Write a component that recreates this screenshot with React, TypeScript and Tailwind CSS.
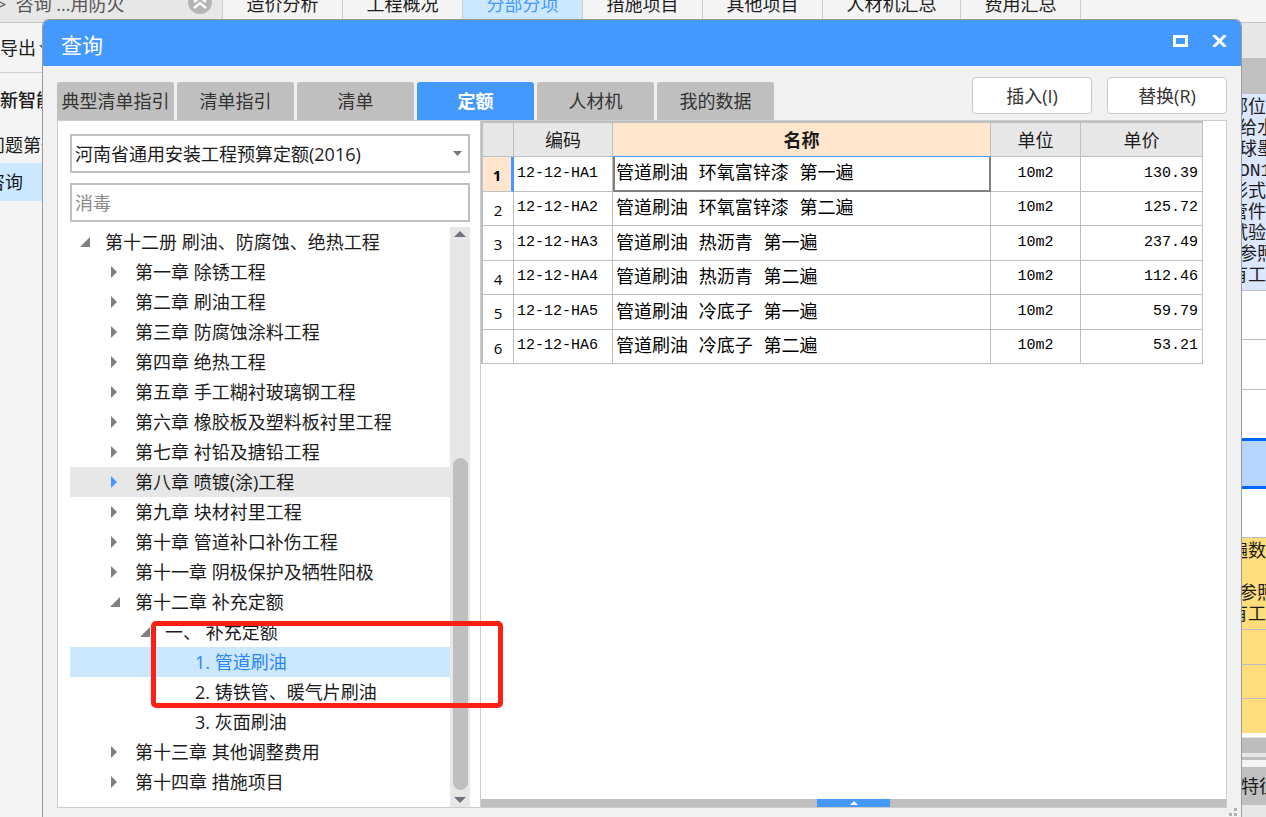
import clsx from "clsx";

const modules = [
  { name: "造价分析", width: "w-[120px]" },
  { name: "工程概况", width: "w-[120px]" },
  { name: "分部分项", width: "w-[120px]", active: true },
  { name: "措施项目", width: "w-[120px]" },
  { name: "其他项目", width: "w-[120px]" },
  { name: "人材机汇总", width: "w-[138px]" },
  { name: "费用汇总", width: "w-[120px]" },
];

const tabs = ["典型清单指引", "清单指引", "清单", "定额", "人材机", "我的数据"];

type Node = {
  text: string;
  level: number;
  open?: boolean;
  leaf?: boolean;
  hover?: boolean;
  selected?: boolean;
  marked?: boolean;
};

const nodes: Node[] = [
  { text: "第十二册 刷油、防腐蚀、绝热工程", level: 0, open: true },
  { text: "第一章 除锈工程", level: 1 },
  { text: "第二章 刷油工程", level: 1 },
  { text: "第三章 防腐蚀涂料工程", level: 1 },
  { text: "第四章 绝热工程", level: 1 },
  { text: "第五章 手工糊衬玻璃钢工程", level: 1 },
  { text: "第六章 橡胶板及塑料板衬里工程", level: 1 },
  { text: "第七章 衬铅及搪铅工程", level: 1 },
  { text: "第八章 喷镀(涂)工程", level: 1, hover: true },
  { text: "第九章 块材衬里工程", level: 1 },
  { text: "第十章 管道补口补伤工程", level: 1 },
  { text: "第十一章 阴极保护及牺牲阳极", level: 1 },
  { text: "第十二章 补充定额", level: 1, open: true },
  { text: "一、 补充定额", level: 2, open: true, marked: true },
  { text: "1. 管道刷油", level: 3, leaf: true, selected: true },
  { text: "2. 铸铁管、暖气片刷油", level: 3, leaf: true },
  { text: "3. 灰面刷油", level: 3, leaf: true },
  { text: "第十三章 其他调整费用", level: 1 },
  { text: "第十四章 措施项目", level: 1 },
];

const indent = ["pl-[10px]", "pl-[40px]", "pl-[70px]", "pl-[100px]"];

const quotas = [
  { code: "12-12-HA1", name: "管道刷油 环氧富锌漆 第一遍", unit: "10m2", price: "130.39" },
  { code: "12-12-HA2", name: "管道刷油 环氧富锌漆 第二遍", unit: "10m2", price: "125.72" },
  { code: "12-12-HA3", name: "管道刷油 热沥青 第一遍", unit: "10m2", price: "237.49" },
  { code: "12-12-HA4", name: "管道刷油 热沥青 第二遍", unit: "10m2", price: "112.46" },
  { code: "12-12-HA5", name: "管道刷油 冷底子 第一遍", unit: "10m2", price: "59.79" },
  { code: "12-12-HA6", name: "管道刷油 冷底子 第二遍", unit: "10m2", price: "53.21" },
];

// feature text of the grid behind the dialog, half of it is covered
const features = [
  { text: "部位", cut: true },
  { text: "给水" },
  { text: "球墨" },
  { text: "DN1" },
  { text: "形式", cut: true },
  { text: "管件", cut: true },
  { text: "试验", cut: true },
  { text: "参照" },
  { text: "有工", cut: true },
];

const features2 = [
  { text: "遍数", cut: true },
  { text: "" },
  { text: "参照" },
  { text: "有工", cut: true },
];

function FeatureLines({ lines }: { lines: { text: string; cut?: boolean }[] }) {
  return (
    <>
      {lines.map((line, i) => (
        <p
          key={i}
          className={clsx(
            "h-[21px] whitespace-nowrap font-['Liberation_Mono','Noto_Sans_CJK_SC',monospace] text-[18px] leading-[21px]",
            line.cut ? "-ml-[11px]" : "-ml-[2px]"
          )}
        >
          {line.text}
        </p>
      ))}
    </>
  );
}

function Background() {
  return (
    <div className="flex h-full flex-col">
      <nav className="flex h-[23px] shrink-0 items-end overflow-hidden border-b border-[#c4c4c4]">
        <div className="flex h-9 w-[223px] shrink-0 items-center justify-between border-r border-[#cccccc] bg-[#e7e7e7] pr-[10px] text-[#555555]">
          <span className="-ml-1 whitespace-nowrap">&gt;&nbsp; 咨询 ...用防火</span>
          <button aria-label="收起" className="mb-1">
            <svg width="24" height="24" viewBox="0 0 24 24" fill="none">
              <circle cx="12" cy="12" r="12" fill="#b5b5b5" />
              <path d="M6 12l6-5 6 5M6 18l6-5 6 5" stroke="#fff" strokeWidth="2.4" />
            </svg>
          </button>
        </div>
        {modules.map((m) => (
          <button
            key={m.name}
            className={clsx(
              "h-9 shrink-0 border-r border-[#cccccc]",
              m.width,
              m.active ? "bg-[#cce8ff] text-[#4499ff]" : "bg-[#f4f4f4]"
            )}
          >
            {m.name}
          </button>
        ))}
      </nav>

      <div className="flex min-h-0 flex-1 justify-between">
        <aside className="w-[43px] overflow-hidden whitespace-nowrap">
          <div className="flex h-[50px] items-center gap-[3px] border-b border-[#d0d0d0]">
            <span>导出</span>
            <svg width="9" height="5" className="shrink-0">
              <path d="M0 0h9L4.500 5z" fill="#666" />
            </svg>
          </div>
          <div className="flex h-[54px] items-center font-medium">新智能</div>
          <div className="flex h-9 items-center">
            <span className="-ml-[13px]">问题第一</span>
          </div>
          <div className="flex h-[38px] items-center bg-[#cce8ff]">
            <span className="-ml-[13px]">咨询</span>
          </div>
        </aside>

        <aside className="flex w-[25px] flex-col overflow-hidden bg-[#e7e7e7]">
          <div className="mt-[35px] h-9 shrink-0 bg-[#c0c0c0]" />
          <div className="h-[197px] shrink-0 border-b border-[#bdbdbd] bg-[#dce6fc] pt-1">
            <FeatureLines lines={features} />
          </div>
          <div className="h-[49px] shrink-0 border-b border-[#bdbdbd] bg-white" />
          <div className="h-[50px] shrink-0 border-b border-[#bdbdbd] bg-white" />
          <div className="h-12 shrink-0 bg-white" />
          <div className="h-[51px] shrink-0 border-y-3 border-[#0066ff] bg-[#b5d5ff]" />
          <div className="h-12 shrink-0 bg-white" />
          <div className="h-[93px] shrink-0 border-y border-[#bdbdbd] bg-[#ffdd7d] pt-1">
            <FeatureLines lines={features2} />
          </div>
          <div className="h-[35px] shrink-0 border-b border-[#bdbdbd] bg-[#ffdd7d]" />
          <div className="h-[34px] shrink-0 border-b border-[#bdbdbd] bg-[#ffdd7d]" />
          <div className="h-[34px] shrink-0 bg-[#ffdd7d]" />
          <div className="h-1 shrink-0 bg-white" />
          <div className="h-[16px] shrink-0 border-t border-[#e0e0e0] bg-[#bdbdbd]" />
          <div className="mt-1 h-[3px] shrink-0 bg-[#bdbdbd]" />
          <div className="h-[7px] shrink-0 bg-[#f4f4f4]" />
          <div className="flex h-[38px] shrink-0 items-center whitespace-nowrap bg-[#c0c0c0]">特征</div>
        </aside>
      </div>
    </div>
  );
}

function TreeArrow({ node }: { node: Node }) {
  if (node.leaf) return null;
  if (node.open) {
    return (
      <svg width="10" height="10" viewBox="0 0 10 10">
        <path d="M10 0v10H0z" fill="#808080" />
      </svg>
    );
  }
  return (
    <svg width="10" height="12" viewBox="0 0 10 12">
      <path d="M1 0l6 6-6 6z" fill={node.hover ? "#4499ff" : "#808080"} />
    </svg>
  );
}

function QuotaTree() {
  return (
    <div className="flex min-h-0 flex-1">
      <ul className="min-w-0 flex-1">
        {nodes.map((node) => (
          <li key={node.text} className="relative">
            <button
              className={clsx(
                "flex h-[30px] w-full items-center whitespace-nowrap text-left",
                indent[node.level],
                node.hover && "bg-[#e7e7e7]",
                node.selected && "bg-[#cce8ff] text-[#2b85f0]"
              )}
            >
              <span className="w-[25px] shrink-0">
                <TreeArrow node={node} />
              </span>
              {node.text}
            </button>
            {node.marked && (
              <div className="pointer-events-none absolute top-1 left-[81px] z-10 h-[87px] w-[352px] rounded-[5px] border-5 border-[#ff2015]" />
            )}
          </li>
        ))}
      </ul>
      <div className="flex w-5 flex-col items-center bg-[#e7e7e7] py-1">
        <svg width="12" height="6">
          <path d="M6 0l6 6H0z" fill="#6f737c" />
        </svg>
        <div className="mt-auto h-[332px] w-[15px] rounded-full bg-[#bfbfbf]" />
        <svg width="12" height="6" className="mt-[7px]">
          <path d="M0 0h12L6 6z" fill="#6f737c" />
        </svg>
      </div>
    </div>
  );
}

function QuotaTable() {
  return (
    <table className="h-[243px] w-full table-fixed border-separate border-spacing-0 border-t-2 border-l-2 border-[#bfbfbf]">
      <colgroup>
        <col className="w-[31px]" />
        <col className="w-[99px]" />
        <col />
        <col className="w-[90px]" />
        <col className="w-[122px]" />
      </colgroup>
      <thead>
        <tr className="h-[34px] bg-[#e7e7e7]">
          <th className="border-r border-b border-[#bfbfbf]" />
          <th className="border-r border-b border-[#bfbfbf] font-normal">编码</th>
          <th className="border-r border-b border-r-[#bfbfbf] border-b-[#4499ff] bg-[#ffe6cc] font-bold">名称</th>
          <th className="border-r border-b border-[#bfbfbf] font-normal">单位</th>
          <th className="border-r border-b border-[#bfbfbf] font-normal">单价</th>
        </tr>
      </thead>
      <tbody className="font-['Liberation_Mono','Noto_Sans_CJK_SC',monospace] text-[15px] text-black">
        {quotas.map((q, i) => (
          <tr key={q.code}>
            <td
              className={clsx(
                "border-b border-[#bfbfbf] pt-[3px] text-center font-['Open_Sans','Noto_Sans_CJK_SC',sans-serif] text-[15px] leading-5",
                i === 0 ? "border-r-3 border-r-[#4499ff] bg-[#ffe6cc] font-bold" : "border-r"
              )}
            >
              {i + 1}
            </td>
            <td className="border-r border-b border-[#bfbfbf] pl-[3px] whitespace-nowrap">{q.code}</td>
            <td
              className={clsx(
                "pt-[2px] text-[18px] leading-5 whitespace-nowrap",
                i === 0
                  ? "border-r-2 border-b-2 border-l-2 border-[#808080] pl-px"
                  : "border-r border-b border-[#bfbfbf] pl-[3px]"
              )}
            >
              {q.name}
            </td>
            <td className="border-r border-b border-[#bfbfbf] text-center">{q.unit}</td>
            <td className="border-r border-b border-[#bfbfbf] pr-1 text-right">{q.price}</td>
          </tr>
        ))}
      </tbody>
    </table>
  );
}

function QueryDialog() {
  return (
    <section
      role="dialog"
      aria-label="查询"
      className="absolute top-[19px] right-[24px] bottom-0 left-[42px] flex flex-col rounded-t-[7px] border-x border-t border-[#9c9c9c] bg-[#f1f1f1]"
    >
      <header className="flex h-[46px] shrink-0 items-center justify-between rounded-t-[6px] bg-[#4499ff] px-[14px] text-white">
        <h1 className="pt-[3px] pl-1 text-[21px]">查询</h1>
        <div className="flex items-center gap-6 pb-1">
          <button aria-label="最大化">
            <svg width="15" height="12" fill="none">
              <path d="M1.500 1.500h12v9h-12z" stroke="#fff" strokeWidth="3" />
            </svg>
          </button>
          <button aria-label="关闭">
            <svg width="15" height="12" viewBox="0 0 15 12" fill="none">
              <path d="M1.500 0L13.500 12M13.500 0L1.500 12" stroke="#fff" strokeWidth="3" />
            </svg>
          </button>
        </div>
      </header>

      <div className="flex min-h-0 flex-1 flex-col px-[14px] pb-[9px]">
        <div className="flex h-[54px] shrink-0 items-end justify-between">
          <div className="flex gap-[3px]" role="tablist">
            {tabs.map((tab) => (
              <button
                key={tab}
                role="tab"
                aria-selected={tab === "定额"}
                className={clsx(
                  "h-[38px] w-[117px] rounded-t-[3px] whitespace-nowrap",
                  tab === "定额" ? "bg-[#4499ff] font-bold text-white" : "bg-[#bfbfbf] text-[#333333]"
                )}
              >
                {tab}
              </button>
            ))}
          </div>
          <div className="flex gap-[15px] pb-[6px]">
            <button className="h-[37px] w-[120px] rounded-[4px] border border-[#c8c8c8] bg-white text-[#333333]">
              插入(I)
            </button>
            <button className="h-[37px] w-[120px] rounded-[4px] border border-[#c8c8c8] bg-white text-[#333333]">
              替换(R)
            </button>
          </div>
        </div>

        <div className="flex min-h-0 flex-1 border border-[#cccccc] bg-white">
          <div className="flex w-[423px] shrink-0 flex-col border-r border-[#cccccc] pt-[13px] pr-[10px] pl-3">
            <div className="relative">
              <select
                aria-label="定额库"
                className="h-[39px] w-full appearance-none border-2 border-[#bfbfbf] bg-white px-[3px] outline-none"
              >
                <option>河南省通用安装工程预算定额(2016)</option>
              </select>
              <svg width="9" height="5" className="pointer-events-none absolute top-[17px] right-2">
                <path d="M0 0h9L4.500 5z" fill="#777" />
              </svg>
            </div>
            <input
              aria-label="搜索"
              placeholder="消毒"
              className="mt-[10px] mb-[5px] h-[39px] w-full border-2 border-[#bfbfbf] px-[3px] outline-none placeholder:text-[#8a8a8a]"
            />
            <QuotaTree />
          </div>

          <div className="flex min-w-0 flex-1 flex-col">
            <div className="min-h-0 flex-1 pr-[23px]">
              <QuotaTable />
            </div>
            <div className="flex h-2 justify-center bg-[#bfbfbf]">
              <button aria-label="展开" className="flex w-[73px] items-center justify-center bg-[#4499ff]">
                <svg width="8" height="4">
                  <path d="M4 0l4 4H0z" fill="#fff" />
                </svg>
              </button>
            </div>
          </div>
        </div>
      </div>

      <svg width="8" height="8" className="absolute right-1 bottom-px" fill="#b0b0b0">
        <path d="M5 0h3v3H5zM5 5h3v3H5zM0 5h3v3H0z" />
      </svg>
    </section>
  );
}

export default function App() {
  return (
    <main className="relative h-screen overflow-hidden bg-[#f4f4f4] font-['Open_Sans','Noto_Sans_CJK_SC',sans-serif] text-[18px] leading-6 text-[#1c1c1c]">
      <Background />
      <QueryDialog />
    </main>
  );
}
